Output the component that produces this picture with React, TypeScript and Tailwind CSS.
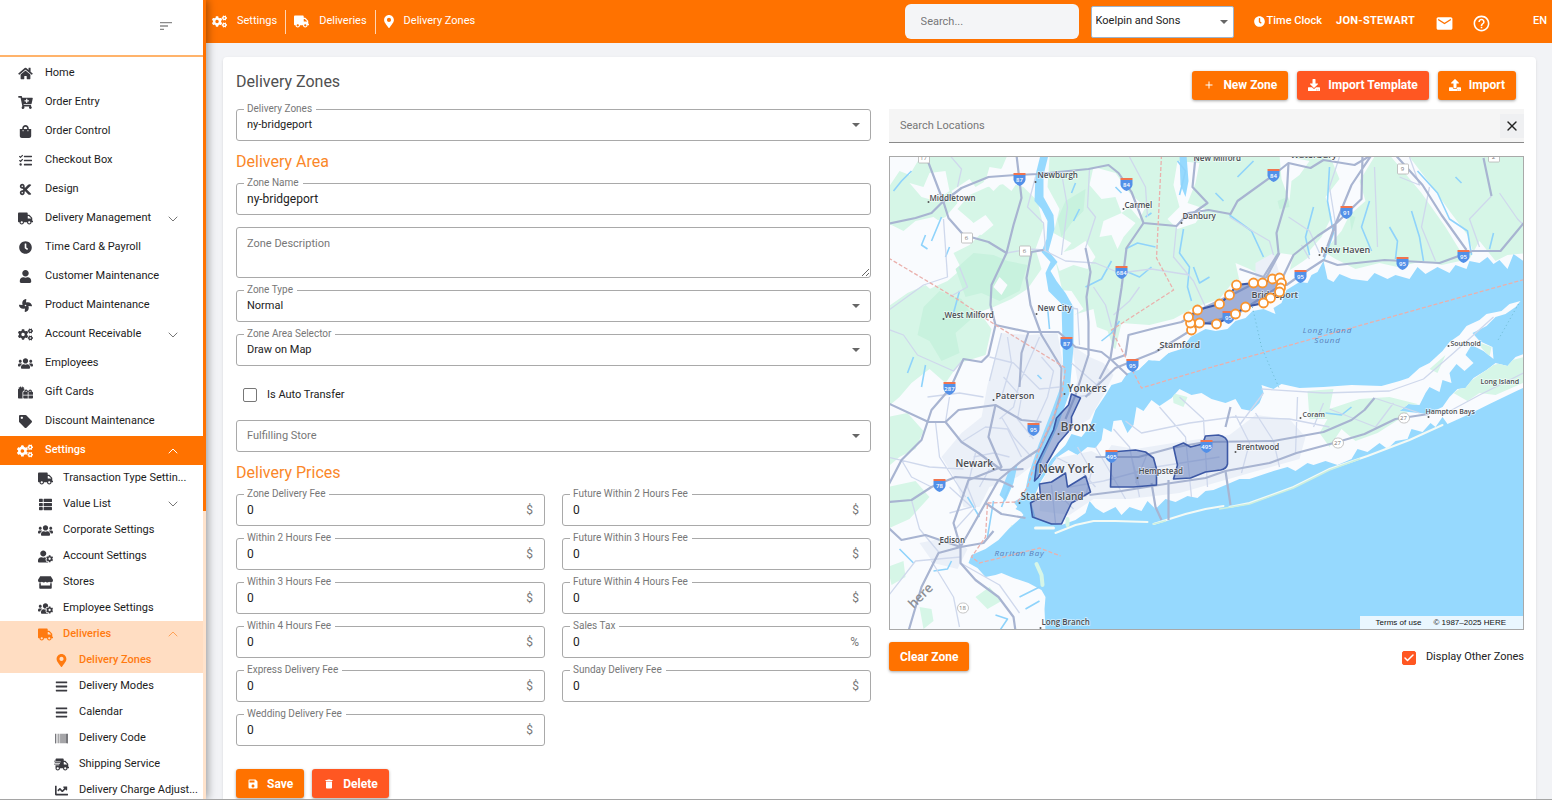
import { useState } from "react";
import type { ReactNode } from "react";
import type { IconType } from "react-icons";
import {
  FaBars,
  FaBarcode,
  FaCartPlus,
  FaChartLine,
  FaClock,
  FaCogs,
  FaCut,
  FaDownload,
  FaFan,
  FaGifts,
  FaHome,
  FaMapMarkerAlt,
  FaShippingFast,
  FaShoppingBag,
  FaStore,
  FaTag,
  FaTasks,
  FaThList,
  FaTruck,
  FaUpload,
  FaUser,
  FaUserCog,
  FaUsers,
  FaUsersCog,
} from "react-icons/fa";
import { MdAdd, MdDelete, MdHelpOutline, MdMail, MdSave, MdSort } from "react-icons/md";
import { Check, ChevronDown, ChevronUp, X } from "lucide-react";

type NavItem = { label: string; icon: IconType; chevron?: "up" | "down"; active?: boolean };

const mainNav: NavItem[] = [
  { label: "Home", icon: FaHome },
  { label: "Order Entry", icon: FaCartPlus },
  { label: "Order Control", icon: FaShoppingBag },
  { label: "Checkout Box", icon: FaTasks },
  { label: "Design", icon: FaCut },
  { label: "Delivery Management", icon: FaTruck, chevron: "down" },
  { label: "Time Card & Payroll", icon: FaClock },
  { label: "Customer Maintenance", icon: FaUser },
  { label: "Product Maintenance", icon: FaFan },
  { label: "Account Receivable", icon: FaCogs, chevron: "down" },
  { label: "Employees", icon: FaUsers },
  { label: "Gift Cards", icon: FaGifts },
  { label: "Discount Maintenance", icon: FaTag },
];

const settingsNav: NavItem[] = [
  { label: "Transaction Type Settin...", icon: FaTruck },
  { label: "Value List", icon: FaThList, chevron: "down" },
  { label: "Corporate Settings", icon: FaUsers },
  { label: "Account Settings", icon: FaUserCog },
  { label: "Stores", icon: FaStore },
  { label: "Employee Settings", icon: FaUsersCog },
  { label: "Deliveries", icon: FaTruck, chevron: "up", active: true },
];

const deliveriesNav: NavItem[] = [
  { label: "Delivery Zones", icon: FaMapMarkerAlt, active: true },
  { label: "Delivery Modes", icon: FaBars },
  { label: "Calendar", icon: FaBars },
  { label: "Delivery Code", icon: FaBarcode },
  { label: "Shipping Service", icon: FaShippingFast },
  { label: "Delivery Charge Adjust...", icon: FaChartLine },
];

const fees = [
  ["Zone Delivery Fee", "$"],
  ["Future Within 2 Hours Fee", "$"],
  ["Within 2 Hours Fee", "$"],
  ["Future Within 3 Hours Fee", "$"],
  ["Within 3 Hours Fee", "$"],
  ["Future Within 4 Hours Fee", "$"],
  ["Within 4 Hours Fee", "$"],
  ["Sales Tax", "%"],
  ["Express Delivery Fee", "$"],
  ["Sunday Delivery Fee", "$"],
  ["Wedding Delivery Fee", "$"],
];

function NavChevron({ dir }: { dir?: "up" | "down" }) {
  if (!dir) return null;
  const Icon = dir === "up" ? ChevronUp : ChevronDown;
  return <Icon className="h-4 w-4 shrink-0 opacity-60" strokeWidth={1.5} />;
}

function NavRow({ item, level }: { item: NavItem; level: 0 | 1 | 2 }) {
  const Icon = item.icon;
  const indent = ["h-[29px] gap-3 pl-[17px] pr-[22px]", "h-[26px] gap-2.5 pl-[37px] pr-[22px]", "h-[26px] gap-2.5 pl-[53px] pr-2"][level];
  const color = item.active ? "bg-[#ffddc2] text-[#ff7a10]" : "text-[#1c1c1c] hover:bg-orange-50";
  return (
    <li>
      <a href="#" className={`flex items-center text-[11px] ${indent} ${color} ${item.active ? "font-medium" : ""}`}>
        <span className={`flex w-4 shrink-0 justify-center ${item.active ? "" : "text-[#3a3a40]"}`}>
          <Icon className="h-[13px] w-[15px]" />
        </span>
        <span className="min-w-0 flex-1 whitespace-nowrap">{item.label}</span>
        <NavChevron dir={item.chevron} />
      </a>
    </li>
  );
}

function Sidebar() {
  return (
    <aside className="relative z-10 flex w-[206px] shrink-0 shadow-[2px_0_8px_rgba(0,0,0,0.35)]">
      <div className="flex min-w-0 flex-1 flex-col overflow-hidden bg-white">
        <div className="flex h-[57px] shrink-0 items-center justify-end border-b-2 border-[#ffb36b] pr-[29px] pb-1">
          <button type="button" aria-label="Toggle sidebar" className="text-[#8a8a8a]">
            <MdSort className="h-4 w-4" />
          </button>
        </div>
        <nav className="overflow-hidden pt-0.5">
          <ul>
            {mainNav.map((item) => (
              <NavRow key={item.label} item={item} level={0} />
            ))}
            <li>
              <a href="#" className="flex h-[29px] items-center gap-3 bg-[#ff7200] pr-[22px] pl-[17px] text-[11px] font-medium text-white">
                <FaCogs className="h-[14px] w-4" />
                <span className="flex-1">Settings</span>
                <ChevronUp className="h-4 w-4" strokeWidth={1.5} />
              </a>
            </li>
            {settingsNav.map((item) => (
              <NavRow key={item.label} item={item} level={1} />
            ))}
            {deliveriesNav.map((item) => (
              <NavRow key={item.label} item={item} level={2} />
            ))}
          </ul>
        </nav>
      </div>
      {/* Scroll track */}
      <div className="w-[3px] bg-[#ffe3cc]">
        <div className="h-16/25 bg-[#ff7200]" />
      </div>
    </aside>
  );
}

function Caret({ className }: { className: string }) {
  return (
    <svg viewBox="0 0 8 4" className={`pointer-events-none absolute h-1 w-2 ${className}`} aria-hidden="true">
      <path d="M0 0h8L4 4z" fill="#666" />
    </svg>
  );
}

function TopBar() {
  return (
    <header className="flex h-[43px] shrink-0 items-center bg-[#ff7200] pr-[5px] pl-1.5 text-[11px] font-medium text-white">
      <nav className="flex items-center font-normal" aria-label="Breadcrumb">
        <a href="#" className="flex h-6 items-center gap-2.5 border-r border-white/70 pr-2">
          <FaCogs className="h-[13px] w-[15px]" />
          Settings
        </a>
        <a href="#" className="flex h-6 items-center gap-2.5 border-r border-white/70 px-2">
          <FaTruck className="h-[13px] w-[15px]" />
          Deliveries
        </a>
        <a href="#" className="flex h-6 items-center gap-2.5 pl-2">
          <FaMapMarkerAlt className="h-[13px] w-[10px]" />
          Delivery Zones
        </a>
      </nav>
      <input
        aria-label="Search"
        placeholder="Search..."
        className="ml-auto h-[35px] w-[174px] rounded-md bg-[#f4f5f7] px-4 font-normal text-[#333] placeholder:text-[#777]"
      />
      <div className="relative ml-3">
        <select aria-label="Store" className="h-8 w-[143px] appearance-none rounded-xs border border-[#9db4cc] bg-white pr-5 pl-1 font-normal text-[#222]">
          <option>Koelpin and Sons</option>
        </select>
        <Caret className="top-3.5 right-1.5" />
      </div>
      <button type="button" className="ml-5 flex items-center gap-0.5">
        <FaClock className="h-[11px] w-[11px]" />
        Time Clock
      </button>
      <button type="button" className="ml-3.5 font-bold tracking-wide">
        JON-STEWART
      </button>
      <button type="button" aria-label="Messages" className="ml-5 pt-1">
        <MdMail className="h-[19px] w-[19px]" />
      </button>
      <button type="button" aria-label="Help" className="ml-[18px] pt-1">
        <MdHelpOutline className="h-[19px] w-[19px]" />
      </button>
      <button type="button" className="ml-[42px]">
        EN
      </button>
    </header>
  );
}

function ActionButton({ children, red = false }: { children: ReactNode; red?: boolean }) {
  return (
    <button
      type="button"
      className={`flex h-[29px] items-center gap-2 rounded-[3px] px-[11px] text-xs font-bold text-white shadow-[0_1px_3px_rgba(0,0,0,0.35)] ${
        red ? "bg-[#ff5722]" : "bg-[#ff7200]"
      }`}
    >
      {children}
    </button>
  );
}

function FieldLabel({ id, children }: { id: string; children: ReactNode }) {
  return (
    <label htmlFor={id} className="absolute -top-1.5 left-2 bg-white pr-1 pl-[3px] text-[10px] leading-3 text-[#777]">
      {children}
    </label>
  );
}

const boxClass = "block h-8 w-full rounded-[3px] border border-[#a9a9a9] bg-white px-2.5 text-[#222]";

function SelectField({ id, label, value }: { id: string; label: string; value: string }) {
  return (
    <div className="relative">
      <select id={id} className={`${boxClass} appearance-none text-[11px]`}>
        <option>{value}</option>
      </select>
      <FieldLabel id={id}>{label}</FieldLabel>
      <Caret className="top-3.5 right-[11px]" />
    </div>
  );
}

function FeeField({ label, unit }: { label: string; unit: string }) {
  const id = label.toLowerCase().replace(/\s+/g, "-");
  return (
    <div className="relative">
      <input id={id} defaultValue="0" className={`${boxClass} text-xs`} />
      <FieldLabel id={id}>{label}</FieldLabel>
      <span className="absolute top-2 right-3 text-xs leading-4 text-[#777]">{unit}</span>
    </div>
  );
}

function SectionTitle({ children }: { children: ReactNode }) {
  return <h2 className="flex h-[42px] items-center text-base text-[#fa8729]">{children}</h2>;
}

function ZoneForm() {
  return (
    <form>
      <SelectField id="delivery-zone" label="Delivery Zones" value="ny-bridgeport" />
      <SectionTitle>Delivery Area</SectionTitle>
      <div className="flex flex-col gap-3">
        <div className="relative">
          <input id="zone-name" defaultValue="ny-bridgeport" className={`${boxClass} text-xs`} />
          <FieldLabel id="zone-name">Zone Name</FieldLabel>
        </div>
        <textarea
          aria-label="Zone Description"
          placeholder="Zone Description"
          className="block h-[51px] w-full resize-y rounded-[3px] border border-[#a9a9a9] px-2.5 py-2 text-[11px] placeholder:text-[#777]"
        />
        <SelectField id="zone-type" label="Zone Type" value="Normal" />
        <SelectField id="zone-area" label="Zone Area Selector" value="Draw on Map" />
      </div>
      <div className="flex h-[54px] items-center gap-2.5 pt-1 pl-[7px] text-[11px] text-[#222]">
        <input id="auto-transfer" type="checkbox" className="h-3.5 w-3.5 appearance-none rounded-xs border border-[#777] checked:bg-[#ff5722]" />
        <label htmlFor="auto-transfer">Is Auto Transfer</label>
      </div>
      <div className="relative">
        <select aria-label="Fulfilling Store" className="block h-8 w-full appearance-none rounded-[3px] border border-[#a9a9a9] bg-white px-2.5 text-[11px] text-[#777]">
          <option>Fulfilling Store</option>
        </select>
        <Caret className="top-3.5 right-[11px]" />
      </div>
      <SectionTitle>Delivery Prices</SectionTitle>
      <div className="grid grid-cols-2 gap-x-[17px] gap-y-3">
        {fees.map(([label, unit]) => (
          <FeeField key={label} label={label} unit={unit} />
        ))}
      </div>
      <div className="mt-[23px] flex gap-2">
        <ActionButton>
          <MdSave className="h-3 w-3" />
          Save
        </ActionButton>
        <ActionButton red>
          <MdDelete className="h-3 w-3" />
          Delete
        </ActionButton>
      </div>
    </form>
  );
}

const mainland =
  "M-2-2H640V98L634 104L624 97L618 112L610 103L604 107L598 100L590 106L580 104L577 112L566 108L560 116L548 110L536 117L528 110L520 122L506 118L498 122L485 116L478 124L462 122L450 117L444 125L438 122L434 104L428 115L422 118L418 126L410 125L397 133L392 146L384 151L386 157L374 152L363 154L356 161L346 164L338 172L326 174L316 172L301 180L292 192L279 196L270 204L259 203L249 213L238 216L232 225L222 228L216 238L206 253L200 270L192 280L182 277L176 288L162 302L150 321L142 320L138 334L131 341L124 345L134 358L128 364L120 371L109 383L96 392L82 398L79 406L88 411L96 420L106 418L112 416L124 421L139 426L152 433L156 440L155 452L156 475H-2Z";
const longIsland =
  "M142 346L151 325L158 314L168 300L179 293L188 298L198 290L206 291L212 283L214 271L222 275L224 264L232 263L238 276L244 268L247 250L254 254L262 243L270 249L282 241L290 232L302 238L312 236L322 242L336 246L346 242L352 252L362 254L370 246L374 236L372 228L384 232L392 227L410 231L434 230L462 228L492 229L510 224L519 221L530 211L540 206L553 194L560 185L570 178L577 169L590 163L597 157L612 154L620 147L631 144L626 150L616 157L606 160L597 169L583 176L590 184L603 190L604 202L594 194L582 188L576 198L584 206L575 214L567 207L560 216L562 226L553 223L550 235L540 230L536 236L530 248L519 247L510 254L538 257L553 250L560 240L568 232L576 231L584 221L597 213L606 206L618 209L626 200L640 195V228L627 234L600 247L580 257L558 267L553 260L546 270L541 266L533 275L522 272L518 282L506 284L498 292L490 286L478 295L468 292L462 302L448 308L436 304L424 308L418 306L406 314L398 310L384 314L372 318L360 322L350 322L336 328L324 333L316 334L308 341L298 339L286 345L276 342L266 352L258 344L252 354L240 350L232 358L226 350L214 356L206 351L200 344L196 356L186 363L172 368L160 366L146 361Z";

const forests = [
  "M-2 32L10 14L20 18L32-2H118L112 12L100 10L96 24L86 30L80 22L62 34L68 46L56 60L42 66L26 70L12 82L-2 98Z",
  "M68 52L80 38L98 30L120 26L134 30L148 44L154 70L146 92L152 112L138 132L122 142L104 150L82 158L60 150L48 160L28 148L40 132L58 124L72 112L64 96L80 88L92 76L82 64Z",
  "M-2 150L18 136L36 128L50 140L66 154L92 158L102 172L96 198L70 206L56 226L40 212L22 226L10 240L-2 250Z",
  "M160 0H640V96L618 98L606 104L590 84L580 102L552 108L534 104L508 110L490 106L466 112L446 102L430 92L414 104L396 116L366 126L346 122L330 142L306 150L284 162L260 168L232 166L226 192L210 184L204 152L184 158L172 130L166 104L182 86L164 76L170 52L158 30Z",
  "M-2 260L18 256L34 274L26 292L10 300L-2 310ZM-2 330L26 324L40 340L20 362L-2 372Z",
  "M86 440L100 430L112 444L98 452ZM30 450L42 452L44 464L34 472ZM-2 410L14 404L16 420L2 428ZM116 378L122 368L128 372L116 386Z",
  "M418 234L444 232L440 252L470 242L500 240L528 247L510 262L488 276L466 284L452 272L440 290L430 276L438 262L420 262ZM540 212L556 198L548 216ZM366 290H380L378 304H366Z",
  "M564 236L584 222L604 208L634 200L638 224L606 238L590 236L578 244ZM283 236L298 240L294 250L284 246ZM586 184L602 190L600 200Z",
];

const darkForests = [
  "M66 112L84 96L104 98L118 104L138 108L130 134L110 144L92 136L76 140Z",
  "M176 44L196 32L194 54L182 66L172 80L168 62Z",
  "M34 150L50 134L72 142L84 160L66 176L70 196L52 204L40 184L28 178Z",
  "M388 44L398 40L400 50L390 52ZM460 58L466 60L462 74Z",
];

const clearings = [
  "M-2 66L14 74L26 64L44 60L58 70L72 78L60 92L44 84L28 96L12 108L-2 100Z",
  "M20 26L34 30L40 16L56 14L60 34L46 44L32 40Z",
  "M74 60L84 66L96 58L104 68L92 78L80 76ZM110 120L118 128L112 138L104 130ZM52 106L62 112L56 124L46 120Z",
  "M126 2L146 6L144 30L130 22L122 34L112 26L104 34L94 24Z",
  "M204 10L226 16L240 36L256 50L250 62L240 50L232 56L226 40L212 42L200 28Z",
  "M164 98L184 92L196 84L206 100L198 112L184 108L170 114Z",
  "M214 64L232 56L246 66L234 80L228 92L222 78L210 80Z",
  "M288 4L310 6L306 26L298 46L316 52L306 66L288 72L278 62L290 50L284 28Z",
  "M390-2L420 4L410 18L402 24L400 44L392 22Z",
  "M440-2H486L470 24L476 44L460 58L452 74L440 88L430 108L418 96L432 80L442 60L436 40L450 22Z",
  "M346 106L360 112L374 120L390 96L404 98L398 122L370 128L350 124Z",
  "M500-2L520 0L540 26L560 54L578 78L584 96L572 96L556 70L532 36L512 12Z",
  "M158 132L182 134L194 152L182 160L168 154Z",
  "M186 162L218 174L226 196L240 190L262 186L290 172L300 180L280 196L250 210L224 226L196 232L184 206Z",
];

const urban = [
  "M112 176L140 178L168 176L174 210L172 240L158 272L146 306L128 320L100 330L90 350L74 350L66 322L52 300L72 276L92 260L98 228Z",
  "M182 188L200 200L214 206L224 218L214 238L200 262L184 272L178 250L188 224Z",
  "M164 302L202 294L214 300L222 288L246 292L296 284L340 278L366 258L400 262L416 280L410 302L360 316L290 336L240 342L204 342L180 358L150 354L152 326Z",
  "M30 386L60 380L78 392L68 412L44 406Z",
  "M366 106L384 96L392 124L366 126Z",
];

const highways = [
  "M-2 67L26 61L42 56L52 46L72 31L99 20L126 18L149 17L179 14L199 12L219 8L229 16L242 35L254 66L276 68L287 69L299 56L319 53L341 57L348 44L384 18L399 6L421 11L434 3L465 8L482-2",
  "M36-2L54 45L59 61L74 78L99 85L117 96",
  "M127-2L132 41L124 68L117 96L102 128L101 148L106 168L99 198L92 205L74 202L61 231L42 253L32 283L12 303L-2 330",
  "M106 168L139 175L169 175L186 190L212 195L222 203L238 218",
  "M154 93L142 95L137 121L141 148L152 178L172 211L171 238L164 262L150 292L132 304L109 323L96 346L79 376L71 390",
  "M254 66L237 91L232 131L221 201L210 222",
  "M196 91L201 115L197 140L199 165L199 198L186 238L176 262",
  "M196 240L226 211L266 195L289 181L310 168L346 158L370 142L392 128L397 128L414 116L434 103L448 108L495 103L550 106L583 94L611 94L626 76L640 59",
  "M222 203L236 198L239 178L266 171L292 165L316 150L346 136L377 120L390 96",
  "M399 6L397 42L387 76L389 96L374 120L350 112",
  "M482-2L462 28L446 67L434 100M473-2L472 42L446 67L446 88M390 127L404 98L428 79L446 67",
  "M506-2L533 28L552 58L577 93M594 1L602 39M306 0L303 30L318 46L304 56",
  "M-2 246L39 265L56 265L72 285L89 296L112 313L134 312",
  "M56 265L69 253L106 248L132 263L152 265",
  "M-2 345L22 343L42 330L66 320L109 323L124 330",
  "M-2 370L12 383L36 378L71 390L71 406L86 423L109 440L124 460L126 474M71 390L49 396L32 430L19 474",
  "M106 248L99 280L112 310L79 323L64 366L71 390L94 386L104 374",
  "M139 175L132 196L130 230M96 346L112 357L136 361",
  "M206 300L249 300L282 291L316 285L384 284L434 275L462 263L475 253L485 241",
  "M200 338L232 334L282 326L316 321L336 314L380 306L407 296L448 285L475 277L506 262L539 257",
  "M262 326L266 350L272 363M279 323V363M336 314L341 348M341 250L336 270",
];

const roads =
  "M60-2L72 12L68 30M54 62L58 120L34 128L-2 154M70 110L78 130L60 140M117 96L140 92L154 93L176 104L206 106L230 116L262 112L300 118M146 20L138 50L154 66L156 94M172 16L178 50L172 98M200 12L198 50L206 60L196 91M240 0L256 30L258 60M287 69L284 100L304 124L316 150M-2 172L14 178L28 198L64 214L74 202M112 176L100 224M150 180L130 226L124 250L110 262M152 200L164 214L158 240L140 280M176 150L188 152L190 188M204 130L216 148L222 170M250 130L240 144L224 158M186 240L200 238L210 224M182 206L212 232M46 265L50 300L76 340M12 303L22 320L42 330M72 285L96 270L118 272L132 300M112 260L124 280L142 300M38 240L70 236L94 240M-2 300L40 310L74 312M86 296L78 330L86 350L66 372M-2 440L26 404L71 400M42 404L64 440L70 470M71 406L110 428L130 456M22 343L30 372L50 396M340 60L356 70L380 84L384 98M399 60L420 74L430 96M446 67L440 30L450 0M520 0L530 28L510 20M485 10L488 90M540 30L532 70L546 104M602 39L580 62L590 90M610 36L628 62L640 74M420 102L412 88M166 300L190 312L206 330M188 290L202 314L196 340M206 290L220 314L236 342M224 272L240 290L250 340M180 330L214 324L266 310L330 300M236 264L252 276L300 266L344 260L400 262L440 270M270 250L296 280L302 340M290 240L314 262L318 330M346 258L360 286L352 316M366 256L384 284L390 310M408 240L406 296M434 246L424 270M374 236L350 268M440 252L486 270L504 246M485 241L530 256M372 232L434 236L500 234L534 222L564 196L604 160M553 258L590 238L634 216M242 300L250 330M258 296L246 326M100 200L124 206L150 232L170 230M114 220L132 240L128 262L144 282M84 300L104 296L120 300M60 330L82 350L60 356M90 330L100 312M152 340L176 344L184 352M162 328L166 366M60 240L56 265M118 180L122 206L112 240";

const streams =
  "M22 14L12 24L4 34M36 78L32 88L38 92M60 90L56 100M52 60L42 84M70 134L64 156M24 200L18 216M36 208L32 230M236 92L248 86L266 90M222 104L212 122L196 130M236 114L250 120L262 110M256 60L262 56M294 72L290 96L300 110L298 130L302 144M304 110L310 126L320 120M340 58L362 74L374 100M424 50L416 80L420 98M440 10L438 44L444 76L434 104M480 44L472 70L482 94M500 70L508 84L506 102M522 54L530 80L534 104M528 14L548 36L560 62L578 74L582 98M566 20L572 26M600 92L604 76M158 150L160 172M212 184L222 176L230 164M62 404L58 412L44 414M104 344L98 380M120 330L112 350M78 340L90 360M130 440L150 430M106 458L118 462L110 474M136 452L150 444M148 218L152 222M10 392L24 406M184 64L190 52M290 38L296 14L288 4M186 26L182 36M226 30L232 36M348 20L364 4M326 36L334 44M436 256L452 258L462 250";

const shields: [number, number, string][] = [
  [130, 22, "87"], [237, 27, "84"], [232, 115, "684"], [177, 186, "87"], [243, 208, "95"], [60, 231, "287"],
  [384, 18, "84"], [457, 55, "91"], [513, 106, "95"], [574, 99, "95"], [411, 119, "95"], [339, 160, "95"],
  [144, 272, "95"], [50, 328, "78"], [222, 299, "495"], [317, 289, "495"],
];

const routes: [number, number, string][] = [
  [34, 1, "17"], [77, 81, "6"], [135, 94, "6"], [513, 12, "9"], [604, 0, "2"], [514, 261, "27"], [448, 286, "27"], [73, 451, "18"],
];

// x, y, font size, name
const towns: [number, number, number, string][] = [
  [40, 44, 8, "Middletown"], [148, 21, 8, "Newburgh"], [235, 51, 8, "Carmel"], [293, 62, 8, "Danbury"],
  [304, 4, 8, "New Milford"], [401, 1, 9, "Waterbury"], [431, 96, 9, "New Haven"], [362, 141, 9, "Bridgeport"],
  [561, 189, 7, "Southold"], [591, 227, 7, "Long Island"], [148, 154, 8, "New City"], [55, 161, 8, "West Milford"],
  [270, 191, 9, "Stamford"], [178, 235, 10, "Yonkers"], [106, 242, 9, "Paterson"], [171, 274, 12, "Bronx"],
  [66, 310, 10, "Newark"], [149, 316, 12, "New York"], [131, 343, 10, "Staten Island"], [50, 386, 8, "Edison"],
  [249, 317, 8, "Hempstead"], [347, 293, 8, "Brentwood"], [413, 260, 7, "Coram"], [536, 257, 7, "Hampton Bays"],
  [152, 468, 8, "Long Branch"],
];

const townDots: [number, number][] = [
  [39, 45], [146, 25], [234, 52], [292, 66], [430, 98], [559, 189], [147, 157], [54, 162], [269, 193], [104, 243],
  [104, 312], [130, 346], [50, 387], [248, 321], [346, 295], [411, 261], [539, 260], [151, 471], [175, 237], [169, 277],
];

const zones = [
  "M182 237L191 241L182 260L182 271L169 286L161 300L149 320L145 324L147 308L164 273L167 261L179 248Z",
  "M150 327L162 325L176 316L178 330L196 319L201 335L182 346L172 367L162 367L143 360L141 346L151 340Z",
  "M222 295L246 293L256 295L264 301L267 312V328L244 330H221Z",
  "M284 290L294 286L301 290L313 287L316 279L329 278Q338 280 338 286V307Q337 312 331 313L316 315L301 321L284 322L288 308Z",
];

const nodes: [number, number][] = [
  [308, 153], [330, 147], [340, 138], [347, 128], [364, 126], [373, 126], [383, 122], [390, 121], [392, 126], [391, 131],
  [390, 135], [381, 141], [374, 146], [356, 150], [346, 157], [327, 167], [310, 166], [302, 173], [301, 166], [299, 160],
];

function ZoneMap({ showOthers }: { showOthers: boolean }) {
  return (
    <div className="relative mt-[13px] h-[474px] overflow-hidden border border-[#a9a9a9]">
      <svg viewBox="0 0 634 472" preserveAspectRatio="xMidYMid slice" className="h-full w-full font-['Open_Sans',sans-serif]">
        <rect width="634" height="472" fill="#96d9fe" />
        <clipPath id="land">
          <path d={mainland} />
          <path d={longIsland} />
        </clipPath>
        <path d={mainland} fill="#f9fbfe" />
        <path d={longIsland} fill="#f9fbfe" />
        <g clipPath="url(#land)">
          {forests.map((d) => (
            <path key={d} d={d} fill="#d6f6e7" />
          ))}
          {darkForests.map((d) => (
            <path key={d} d={d} fill="#c8f2de" />
          ))}
          {clearings.map((d) => (
            <path key={d} d={d} fill="#f9fbfe" />
          ))}
          {urban.map((d) => (
            <path key={d} d={d} fill="#ebf0f8" />
          ))}
        </g>
        {/* Barrier islands */}
        <g fill="none" strokeLinecap="round">
          <path d="M166 376L186 368L204 364L226 364L258 365M264 367L296 357L316 352L334 349M340 350L360 346L404 330L440 312L478 299L520 283L553 268" stroke="#f4faf5" strokeWidth="2" />
          <path d="M330 352L360 347L404 331L440 313L470 302M264 367L276 364" stroke="#cdf0df" strokeWidth="1.5" />
          <path d="M147 407L152 418L153 428M178 362V368" stroke="#d6f6e7" strokeWidth="4" />
          <path d="M146 371H164" stroke="#f4faf5" strokeWidth="3" />
        </g>
        {/* Hudson and inland water */}
        <path d="M151-2L146 18L145 44L152 52L158 64L157 82L152 95L161 105L156 116L159 134L172 147L173 186L174 222L163 252L149 288L139 318L134 342L126 352L138 358L146 328L152 304L168 270L180 236L184 190L184 150L176 136L167 124L161 114L168 105L159 94L165 72L164 58L154 40L154 18L159-2Z" fill="#96d9fe" />
        <path d="M290-2H297L299 24L296 40L291 28ZM120 312L128 308L124 326L116 344L110 338ZM176 288L186 280L198 282L190 286L180 292Z" fill="#96d9fe" />
        <path d={streams} fill="none" stroke="#8fd3fb" strokeWidth="1.6" strokeLinejoin="round" />
        <path d={roads} fill="none" stroke="#cfd8ec" strokeWidth="1.3" strokeLinejoin="round" />
        <g fill="none" stroke="#a8b4d1" strokeWidth="2.2" strokeLinejoin="round">
          {highways.map((d) => (
            <path key={d} d={d} />
          ))}
        </g>
        <g fill="none" stroke="#eab0ac" strokeWidth="1.3" strokeDasharray="4 2">
          <path d="M-1 101L66 141L106 168L176 211L172 240L150 292L138 330L128 345L98 346L96 380L82 400L90 406L150 391L171 399" />
          <path d="M272-2L267 101L284 133L222 173L252 231L319 211L640 121" />
        </g>
        <path d="M362 146L372 190L390 232M629 147L608 184" fill="none" stroke="#6cbad0" strokeWidth="1" strokeDasharray="1 3" />

        {showOthers && (
          <g fill="#5873b8" fillOpacity="0.5" stroke="#3c58a5" strokeWidth="1.6" strokeLinejoin="round">
            {zones.map((d) => (
              <path key={d} d={d} />
            ))}
          </g>
        )}
        <polygon points={nodes.map((n) => n.join(",")).join(" ")} fill="#5873b8" fillOpacity="0.55" stroke="#3c58a5" strokeWidth="2" />

        {shields.map(([x, y, n]) => (
          <g key={`${x}-${y}`}>
            <path d={`M${x - 6} ${y - 4}H${x + 6}V${y + 1}Q${x + 5} ${y + 5} ${x} ${y + 7}Q${x - 5} ${y + 5} ${x - 6} ${y + 1}Z`} fill="#5290e8" />
            <path d={`M${x - 6} ${y - 6}H${x + 6}V${y - 4}H${x - 6}Z`} fill="#f0744f" />
            <text x={x} y={y + 3} textAnchor="middle" fill="#fff" fontSize="6" fontWeight="600">
              {n}
            </text>
          </g>
        ))}
        {routes.map(([x, y, n]) => (
          <g key={`${x}-${y}`}>
            <rect x={x - 5} y={y - 5} width="11" height="10" rx={n === "18" || n === "27" ? 5 : 1} fill="#fff" stroke="#b5b5b5" strokeWidth="0.8" />
            <text x={x} y={y + 2} textAnchor="middle" fill="#777" fontSize="6">
              {n}
            </text>
          </g>
        ))}

        <g fill="#4a4d53" stroke="#fff" strokeOpacity="0.6" strokeWidth="1.5" paintOrder="stroke" fontWeight="600">
          {towns.map(([x, y, size, name]) => (
            <text key={name} x={x} y={y} fontSize={size}>
              {name}
            </text>
          ))}
        </g>
        {townDots.map(([x, y]) => (
          <circle key={`${x}-${y}`} cx={x} cy={y} r="1" fill="#555" />
        ))}
        <g fill="#5b7fb8" fontSize="8" fontStyle="italic" className="tracking-widest">
          <text x="438" y="176" textAnchor="middle">Long Island</text>
          <text x="438" y="186" textAnchor="middle">Sound</text>
          <text x="105" y="399">Raritan Bay</text>
        </g>
        <text x="24" y="452" fontSize="13" fontWeight="600" fill="#8b8e94" transform="rotate(-45 24 452)">
          here
        </text>

        <g fill="#fff" stroke="#f8942f" strokeWidth="1.8">
          {nodes.map(([x, y]) => (
            <circle key={`${x}-${y}`} cx={x} cy={y} r="4.5" />
          ))}
        </g>
      </svg>
      <div className="absolute right-0 bottom-0 flex h-[13px] items-center gap-3 bg-white/80 pr-[17px] pl-4 font-['Liberation_Sans',sans-serif] text-[8px] text-[#111]">
        <a href="#">Terms of use</a>
        <span>© 1987–2025 HERE</span>
      </div>
    </div>
  );
}

function MapPanel() {
  const [showOthers, setShowOthers] = useState(true);

  return (
    <section>
      <div className="flex h-[34px] items-center border-b border-[#8a8a8a] bg-[#f5f5f5]">
        <input aria-label="Search Locations" placeholder="Search Locations" className="h-full min-w-0 flex-1 px-[11px] text-[11px] placeholder:text-[#777]" />
        <button type="button" aria-label="Clear search" className="flex h-6 w-6 items-center justify-center bg-[#eff0f2] text-[#222]">
          <X className="h-4 w-4" strokeWidth={2} />
        </button>
      </div>
      <ZoneMap showOthers={showOthers} />
      <div className="mt-3 flex items-center justify-between">
        <ActionButton>Clear Zone</ActionButton>
        <label className="flex items-center gap-2.5 pt-0.5 text-[11px] text-[#222]">
          <span className="relative flex">
            <input
              type="checkbox"
              checked={showOthers}
              onChange={(e) => setShowOthers(e.target.checked)}
              className="h-3.5 w-3.5 appearance-none rounded-xs border border-[#ff5722] checked:bg-[#ff5722]"
            />
            {showOthers && <Check className="pointer-events-none absolute top-px left-px h-3 w-3 text-white" strokeWidth={3} />}
          </span>
          Display Other Zones
        </label>
      </div>
    </section>
  );
}

export default function App() {
  return (
    <div className="flex h-screen overflow-hidden border-b border-[#a5a5a5] bg-[#f2f3f6] font-['Roboto',sans-serif]">
      <Sidebar />
      <div className="flex min-w-0 flex-1 flex-col">
        <TopBar />
        <main className="min-h-0 flex-1 overflow-hidden pt-3.5 pr-4 pl-[17px]">
          <div className="min-h-full rounded-sm bg-white pt-3 pr-3 pb-6 pl-[13px] shadow-sm">
            <div className="mb-2 flex h-8 items-center justify-between pr-2">
              <h1 className="pb-1.5 text-base text-[#505050]">Delivery Zones</h1>
              <div className="flex gap-[9px]">
                <ActionButton>
                  <MdAdd className="h-3 w-3" />
                  New Zone
                </ActionButton>
                <ActionButton red>
                  <FaDownload className="h-3 w-3" />
                  Import Template
                </ActionButton>
                <ActionButton>
                  <FaUpload className="h-3 w-3" />
                  Import
                </ActionButton>
              </div>
            </div>
            <div className="grid grid-cols-2 items-start gap-[18px]">
              <ZoneForm />
              <MapPanel />
            </div>
          </div>
        </main>
      </div>
    </div>
  );
}
